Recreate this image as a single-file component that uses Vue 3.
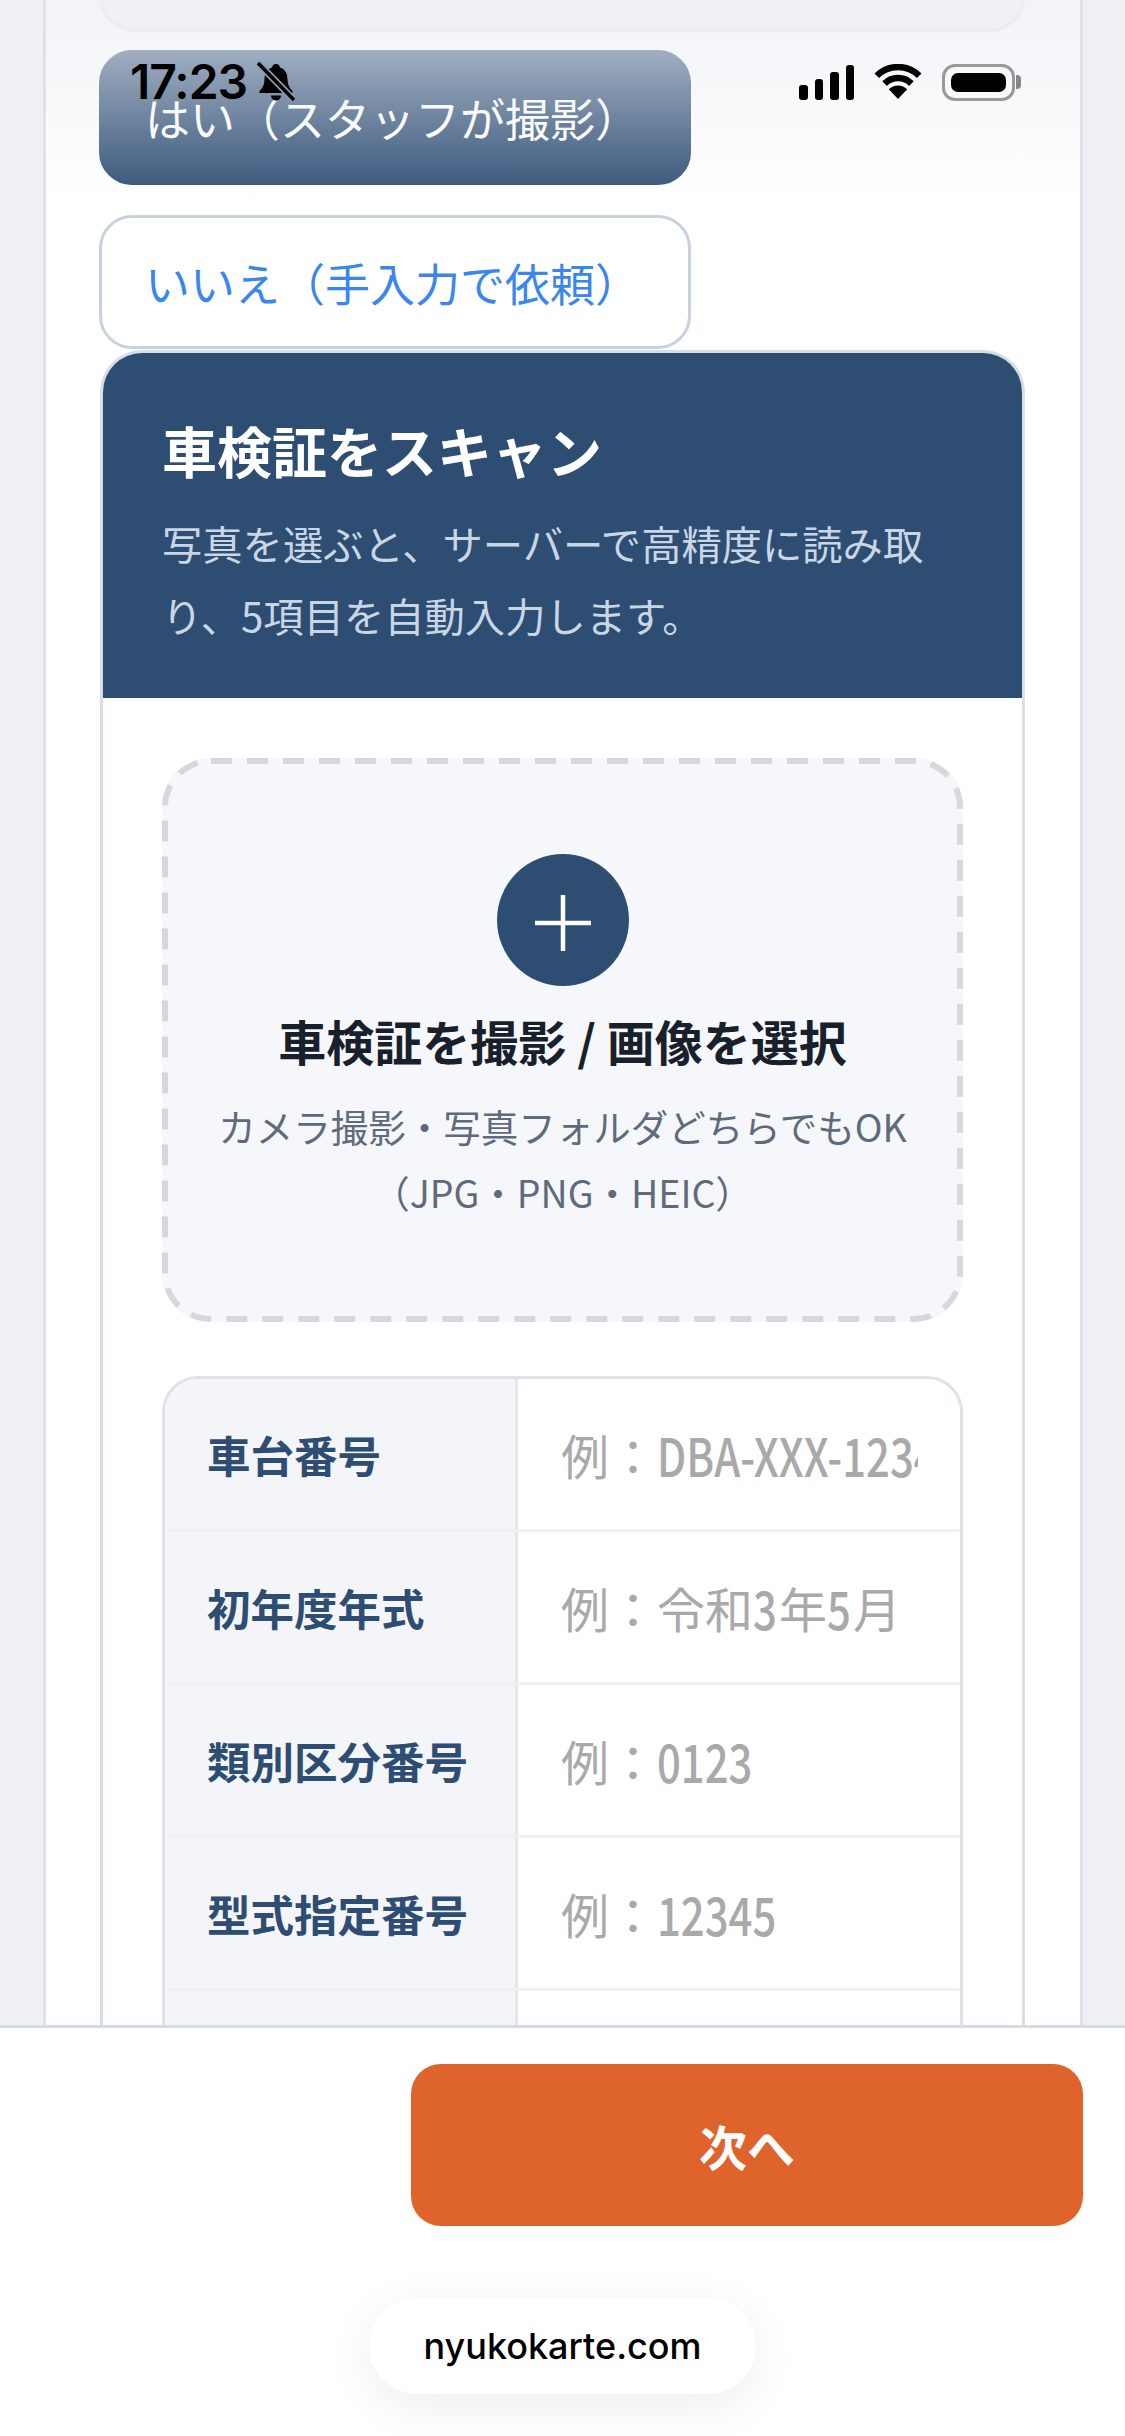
<template>
  <div class="screen">
    <div class="shell">
      <div class="prev-card"></div>

      <div class="choice-group">
        <button type="button" class="choice active">はい（スタッフが撮影）</button>
        <button type="button" class="choice">いいえ（手入力で依頼）</button>
      </div>

      <section class="scan-card">
        <header class="scan-head">
          <h2>車検証をスキャン</h2>
          <p>写真を選ぶと、サーバーで高精度に読み取り、5項目を自動入力します。</p>
        </header>

        <div class="scan-body">
          <div class="dropzone">
            <svg class="dash" viewBox="0 0 801 564" preserveAspectRatio="none">
              <rect x="3" y="3" width="795" height="558" rx="46" ry="46" />
            </svg>
            <div class="plus">
              <svg width="60" height="60" viewBox="0 0 60 60">
                <path d="M30 2V58M2 30H58" />
              </svg>
            </div>
            <div class="drop-title">車検証を撮影 / 画像を選択</div>
            <div class="drop-sub">カメラ撮影・写真フォルダどちらでもOK<br />（JPG・PNG・HEIC）</div>
          </div>

          <div class="fields">
            <div v-for="row in rows" :key="row.key" class="field">
              <label>{{ row.label }}</label>
              <div class="cell">
                <div class="hint">
                  <span
                    v-for="(part, i) in row.hint"
                    :key="i"
                    :class="{ narrow: part.narrow }"
                  >{{ part.text }}</span>
                </div>
              </div>
            </div>
          </div>
        </div>
      </section>
    </div>

    <div class="status-fade"></div>
    <div class="status-bar">
      <div class="status-left">
        <span class="time">17:23</span>
        <svg class="bell" width="38" height="40" viewBox="0 0 38 40">
          <path d="M19 2c2.400 0 3.800 1.600 4 3.500 5.500 1.800 7.500 6.500 7.500 12 0 5 2 8.500 5 11.500v2H2.500v-2c3-3 5-6.500 5-11.500 0-5.500 2-10.200 7.500-12C15.200 3.600 16.600 2 19 2z" />
          <path d="M14 33.500h10c0 2.800-2.200 5-5 5s-5-2.200-5-5z" />
          <path class="slash-bg" d="M1 1 37 38" />
          <path class="slash" d="M1 1 37 38" />
        </svg>
      </div>
      <div class="status-right">
        <div class="signal">
          <i v-for="h in signalBars" :key="h" :style="{ height: h + 'px' }"></i>
        </div>
        <svg class="wifi" width="50" height="36" viewBox="0 0 50 36">
          <path class="arc" d="M3.800 11.800A30 30 0 0 1 46.200 11.800" />
          <path class="arc" d="M11.600 19.600A19 19 0 0 1 38.400 19.600" />
          <path d="M25 35 15.800 25.200A13 13 0 0 1 34.200 25.200Z" />
        </svg>
        <div class="battery"><span></span></div>
      </div>
    </div>

    <footer class="footer">
      <button type="button" class="next">次へ</button>
      <div class="url-pill">nyukokarte.com</div>
    </footer>
  </div>
</template>

<script setup>
const t = (text) => ({ text })
const n = (text) => ({ text, narrow: true })

const rows = [
  { key: 'vin', label: '車台番号', hint: [t('例：'), n('DBA-XXX-1234')] },
  { key: 'year', label: '初年度年式', hint: [t('例：令和'), n('3'), t('年'), n('5'), t('月')] },
  { key: 'class', label: '類別区分番号', hint: [t('例：'), n('0123')] },
  { key: 'model', label: '型式指定番号', hint: [t('例：'), n('12345')] },
  { key: 'other', label: '', hint: [] }
]

const signalBars = [15, 21, 28, 35]
</script>

<style>
html,
body {
  margin: 0;
  background: #eef0f5;
}
</style>

<style scoped>
.screen {
  position: relative;
  width: 1125px;
  height: 2436px;
  overflow: hidden;
  background: #eef0f5;
  font-family: "Noto Sans CJK JP", "Noto Sans", sans-serif;
}

.shell {
  width: 1040px;
  height: 2436px;
  margin-left: 43px;
  padding: 0 55px 0 53px;
  box-sizing: border-box;
  background: #fff;
  border-left: 3px solid #dfe3e9;
  border-right: 3px solid #dfe3e9;
}

.prev-card {
  height: 100px;
  margin: -68px 0 18px;
  background: #eef1f6;
  border: 3px solid #dfe6ef;
  border-radius: 36px;
  box-sizing: border-box;
}

.choice-group {
  display: flex;
  flex-direction: column;
  gap: 30px;
  align-items: flex-start;
}

.choice {
  width: 592px;
  height: 134px;
  padding: 0 0 0 43px;
  text-align: left;
  font-family: inherit;
  font-size: 45px;
  background: #fff;
  color: #3a86f0;
  border: 3px solid #c8d1de;
  border-radius: 33px;
  box-sizing: border-box;
}

.choice.active {
  height: 135px;
  background: #2d4d73;
  border-color: #2d4d73;
  color: #fff;
}

.scan-card {
  margin: 1px 0 0 1px;
  background: #fff;
  border: 3px solid #d8dee6;
  border-bottom: 0;
  border-radius: 42px 42px 0 0;
  overflow: hidden;
}

.scan-head {
  height: 345px;
  padding: 58px 59px 0;
  box-sizing: border-box;
  background: #2d4d73;
}

.scan-head h2 {
  margin: 0 0 20px;
  font-size: 55px;
  line-height: 76px;
  font-weight: 700;
  color: #fff;
}

.scan-head p {
  margin: 0;
  font-size: 40.300px;
  line-height: 72px;
  color: #c9d6e6;
}

.scan-body {
  padding: 60px 59px 0;
}

.dropzone {
  position: relative;
  height: 564px;
  padding-top: 96px;
  box-sizing: border-box;
  display: flex;
  flex-direction: column;
  align-items: center;
  background: #f6f7fa;
  border-radius: 48px;
  text-align: center;
}

.dash {
  position: absolute;
  inset: 0;
  width: 100%;
  height: 100%;
}

.dash rect {
  fill: none;
  stroke: #d6d8dd;
  stroke-width: 6;
  stroke-dasharray: 21 15;
}

.plus {
  width: 132px;
  height: 132px;
  border-radius: 50%;
  background: #2d4d73;
  display: flex;
  align-items: center;
  justify-content: center;
  padding-top: 6px;
  box-sizing: border-box;
}

.plus path {
  fill: none;
  stroke: #fff;
  stroke-width: 4.500;
}

.drop-title {
  margin-top: 18px;
  font-size: 48px;
  line-height: 72px;
  font-weight: 700;
  color: #18202c;
}

.drop-sub {
  margin-top: 17px;
  font-size: 37.500px;
  line-height: 66px;
  color: #5f6b7c;
}

.fields {
  margin-top: 54px;
  border: 3px solid #dfe3e8;
  border-radius: 36px;
  overflow: hidden;
}

.field {
  display: flex;
  height: 150px;
  border-bottom: 3px solid #eef0f3;
}

.field label {
  width: 353px;
  padding-left: 42px;
  box-sizing: border-box;
  display: flex;
  align-items: center;
  background: #f3f5f9;
  border-right: 3px solid #e4e7ec;
  font-size: 43.500px;
  font-weight: 700;
  color: #2d4d73;
}

.cell {
  flex: 1;
  min-width: 0;
  padding: 0 42px 0 43px;
  display: flex;
  align-items: center;
}

.hint {
  width: 100%;
  overflow: hidden;
  white-space: nowrap;
  font-size: 48px;
  line-height: 72px;
  color: #a9a9a9;
}

.hint .narrow {
  display: inline-block;
  font-size: 53px;
  font-weight: 500;
  line-height: 72px;
  vertical-align: top;
  transform: scaleX(0.79);
  transform-origin: left center;
  margin-right: -0.08em;
}

.status-fade {
  position: absolute;
  top: 0;
  left: 46px;
  width: 1034px;
  height: 207px;
  background: linear-gradient(rgba(238, 240, 245, 0.79), rgba(238, 240, 245, 0));
  pointer-events: none;
}

.status-bar {
  position: absolute;
  top: 60px;
  left: 130px;
  right: 110px;
  height: 44px;
  display: flex;
  justify-content: space-between;
  align-items: center;
}

.status-left {
  display: flex;
  align-items: center;
  gap: 10px;
}

.time {
  font-family: Inter, "Liberation Sans", sans-serif;
  font-size: 48px;
  line-height: 44px;
  font-weight: 600;
  letter-spacing: -1px;
  color: #000;
}

.bell path {
  fill: #000;
}

.bell .slash-bg {
  fill: none;
  stroke: #8b9bae;
  stroke-width: 7;
}

.bell .slash {
  fill: none;
  stroke: #000;
  stroke-width: 3.500;
}

.status-right {
  display: flex;
  align-items: center;
}

.signal {
  display: flex;
  align-items: flex-end;
  gap: 7px;
  height: 35px;
  margin-right: 19px;
}

.signal i {
  display: block;
  width: 8.500px;
  background: #000;
  border-radius: 3px;
}

.wifi {
  margin-right: 19px;
}

.wifi .arc {
  fill: none;
  stroke: #000;
  stroke-width: 6.500;
}

.battery {
  position: relative;
  width: 73px;
  height: 37px;
  padding: 6px;
  box-sizing: border-box;
  border: 3px solid #999;
  border-radius: 13px;
}

.battery span {
  display: block;
  height: 100%;
  background: #000;
  border-radius: 7px;
}

.battery::after {
  content: "";
  position: absolute;
  top: 8px;
  right: -9px;
  width: 5px;
  height: 14px;
  background: #888;
  border-radius: 0 4px 4px 0;
}

.footer {
  position: absolute;
  left: 0;
  right: 0;
  bottom: 0;
  height: 411px;
  padding: 36px 42px 0 0;
  box-sizing: border-box;
  display: flex;
  justify-content: flex-end;
  align-items: flex-start;
  background: #fff;
  border-top: 3px solid #d5dce6;
}

.next {
  width: 672px;
  height: 162px;
  border: 0;
  border-radius: 30px;
  background: #df642b;
  color: #fff;
  font-family: inherit;
  font-size: 48px;
  font-weight: 700;
}

.url-pill {
  position: absolute;
  left: 369px;
  bottom: 42px;
  width: 387px;
  height: 96px;
  display: flex;
  align-items: center;
  justify-content: center;
  background: #fff;
  border-radius: 48px;
  box-shadow: 0 12px 50px rgba(0, 0, 0, 0.07);
  font-family: Inter, "Liberation Sans", sans-serif;
  font-size: 36px;
  font-weight: 500;
  color: #000;
}
</style>
